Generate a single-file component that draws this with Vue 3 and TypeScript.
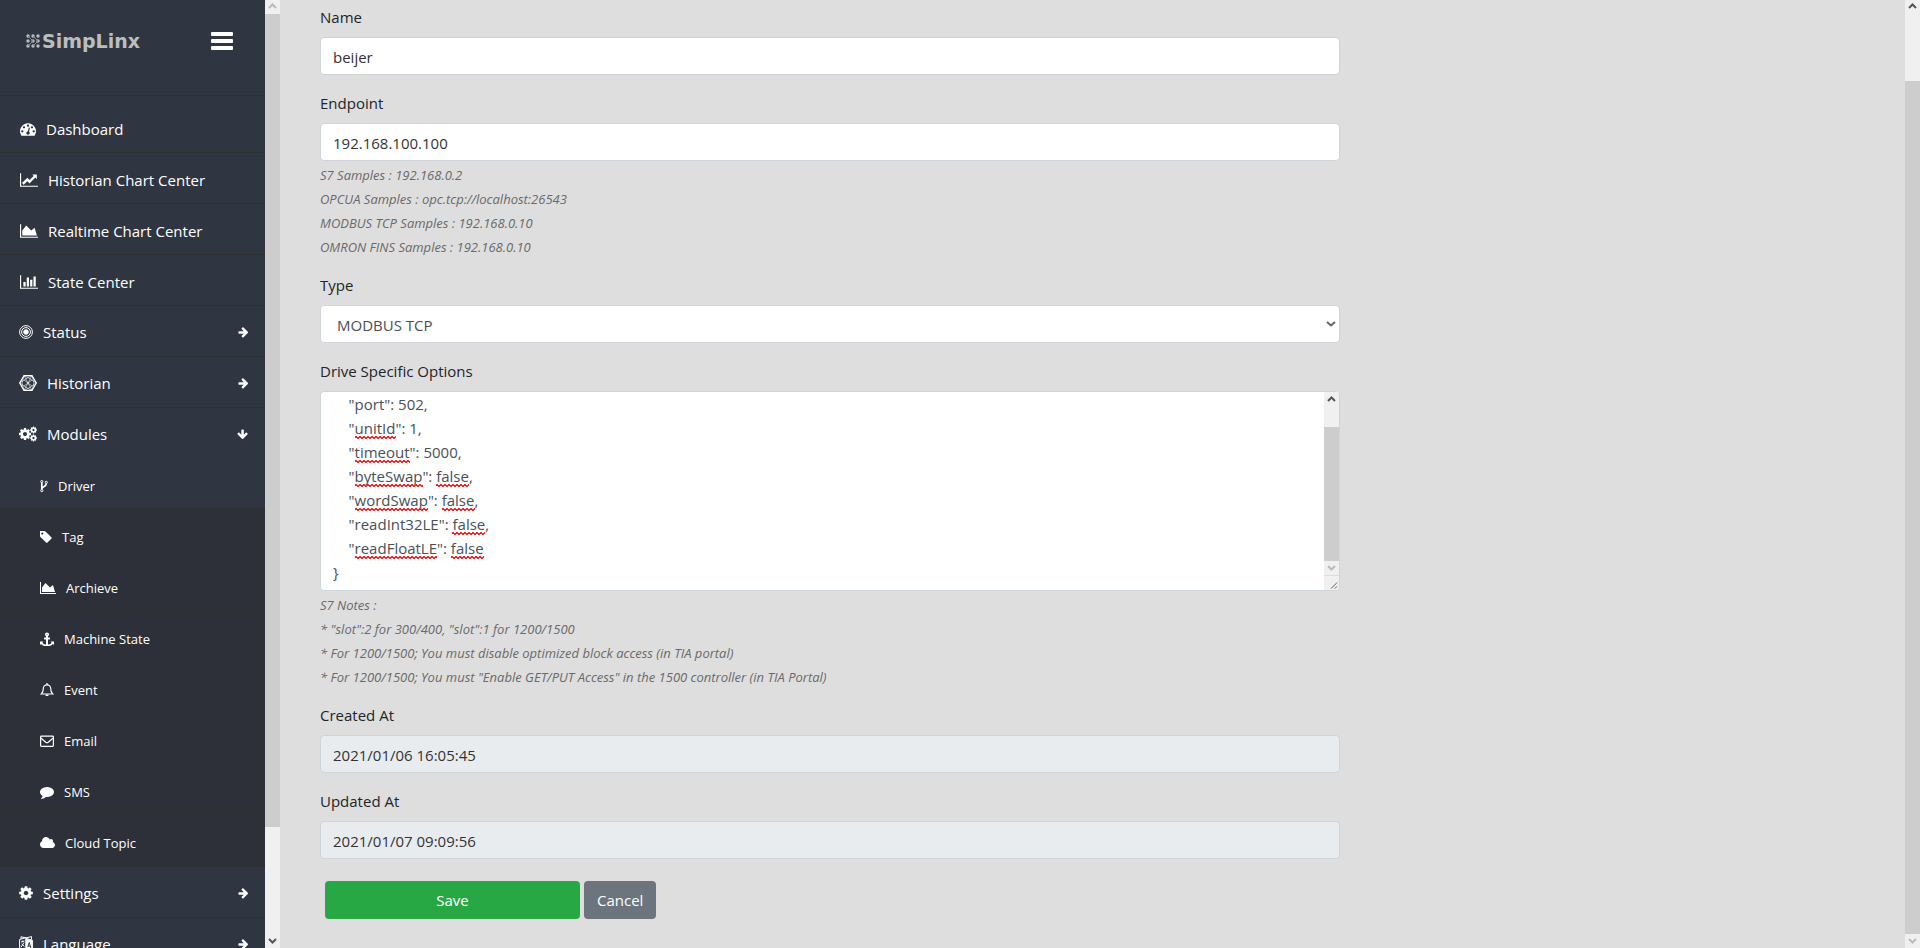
<script setup lang="ts">
import { computed, nextTick, onMounted, ref } from 'vue'

interface NavItem {
  label: string
  icon: string
  w: number
  kind?: 'closed' | 'open'
}

const icons: Record<string, { box: string; d: string }> = {
  dashboard: { box: '0 0 1792 1792', d: 'M384 1152q0-53-37.5-90.5t-90.5-37.5-90.5 37.5-37.5 90.5 37.5 90.5 90.5 37.5 90.5-37.5 37.5-90.5zm192-448q0-53-37.5-90.5t-90.5-37.5-90.5 37.5-37.5 90.5 37.5 90.5 90.5 37.5 90.5-37.5 37.5-90.5zm428 481l101-382q6-26-7.5-48.5t-38.5-29.5-48 6.5-30 39.5l-101 382q-60 5-107 43.5t-63 98.5q-20 77 20 146t117 89 146-20 89-117q16-60-6-117t-72-91zm660-33q0-53-37.5-90.5t-90.5-37.5-90.5 37.5-37.5 90.5 37.5 90.5 90.5 37.5 90.5-37.5 37.5-90.5zm-640-640q0-53-37.5-90.5t-90.5-37.5-90.5 37.5-37.5 90.5 37.5 90.5 90.5 37.5 90.5-37.5 37.5-90.5zm448 192q0-53-37.5-90.5t-90.5-37.5-90.5 37.5-37.5 90.5 37.5 90.5 90.5 37.5 90.5-37.5 37.5-90.5zm320 448q0 261-141 483-19 29-54 29h-1402q-35 0-54-29-141-221-141-483 0-182 71-348t191-286 286-191 348-71 348 71 286 191 191 286 71 348z' },
  line: { box: '0 0 2048 1792', d: 'M2048 1536v128h-2048v-1536h128v1408h1920zm-128-1248v435q0 21-19.5 29.5t-35.5-7.5l-121-121-633 633q-10 10-23 10t-23-10l-233-233-416 416-192-192 585-585q10-10 23-10t23 10l233 233 464-464-121-121q-16-16-7.5-35.5t29.5-19.5h435q14 0 23 9t9 23z' },
  area: { box: '0 0 2048 1792', d: 'M2048 1536v128h-2048v-1536h128v1408h1920zm-384-1024l256 896h-1664v-576l448-576 576 576z' },
  bar: { box: '0 0 2048 1792', d: 'M640 896v512h-256v-512h256zm384-512v1024h-256v-1024h256zm1024 1152v128h-2048v-1536h128v1408h1920zm-640-896v768h-256v-768h256zm384-384v1152h-256v-1152h256z' },
  cog: { box: '128 0 1536 1792', d: 'M1152 896q0-106-75-181t-181-75-181 75-75 181 75 181 181 75 181-75 75-181zm512-109v222q0 12-8 23t-20 13l-185 28q-19 54-39 91 35 50 107 138 10 12 10 25t-9 23q-27 37-99 108t-94 71q-12 0-26-9l-138-108q-44 23-91 38-16 136-29 186-7 28-36 28h-222q-14 0-24.5-8.5t-11.5-21.5l-28-184q-49-16-90-37l-141 107q-10 9-25 9-14 0-25-11-126-114-165-168-7-10-7-23 0-12 8-23 15-21 51-66.5t54-70.5q-27-50-41-99l-183-27q-13-2-21-12.5t-8-23.5v-222q0-12 8-23t19-13l186-28q14-46 39-92-40-57-107-138-10-12-10-24 0-10 9-23 26-36 98.5-107.5t94.5-71.5q13 0 26 10l138 107q44-23 91-38 16-136 29-186 7-28 36-28h222q14 0 24.5 8.5t11.5 21.5l28 184q49 16 90 37l142-107q9-9 24-9 13 0 25 10 129 119 165 170 7 8 7 22 0 12-8 23-15 21-51 66.5t-54 70.5q26 50 41 98l183 28q13 2 21 12.5t8 23.5z' },
  tag: { box: '192 0 1472 1792', d: 'M576 448q0-53-37.5-90.5t-90.5-37.5-90.5 37.5-37.5 90.5 37.5 90.5 90.5 37.5 90.5-37.5 37.5-90.5zm1067 576q0 53-37 90l-491 492q-39 37-91 37-53 0-90-37l-715-716q-38-37-64.5-101t-26.5-117v-416q0-52 38-90t90-38h416q53 0 117 26.5t102 64.5l715 714q37 39 37 91z' },
  anchor: { box: '0 0 1792 1792', d: 'M960 320q0-26-19-45t-45-19-45 19-19 45 19 45 45 19 45-19 19-45zm832 928v352q0 22-20 30-8 2-12 2-12 0-23-9l-93-93q-119 143-318.5 226.5t-429.5 83.5-429.5-83.5-318.5-226.5l-93 93q-9 9-23 9-4 0-12-2-20-8-20-30v-352q0-14 9-23t23-9h352q22 0 30 20 8 19-7 35l-100 100q67 91 189.5 153.5t271.5 82.5v-647h-192q-26 0-45-19t-19-45v-128q0-26 19-45t45-19h192v-163q-58-34-93-92.5t-35-128.5q0-106 75-181t181-75 181 75 75 181q0 70-35 128.5t-93 92.5v163h192q26 0 45 19t19 45v128q0 26-19 45t-45 19h-192v647q149-20 271.5-82.5t189.5-153.5l-100-100q-15-16-7-35 8-20 30-20h352q14 0 23 9t9 23z' },
  comment: { box: '0 0 1792 1792', d: 'M1792 896q0 174-120 321.5t-326 233-450 85.5q-70 0-145-8-198 175-460 242-49 14-114 22-17 2-30.5-9t-17.5-29v-1q-3-4-.5-12t2-10 4.5-9.5l6-9 7-8.5 8-9q7-8 31-34.5t34.5-38 31-39.5 32.5-51 27-59 26-76q-157-89-247.5-220t-90.5-281q0-130 71-248.5t191-204.5 286-136.5 348-50.5q244 0 450 85.5t326 233 120 321.5z' },
  cloud: { box: '64 0 1920 1792', d: 'M1984 1152q0 159-112.5 271.5t-271.5 112.5h-1088q-185 0-316.5-131.5t-131.5-316.5q0-132 71-241.5t187-163.5q-2-28-2-43 0-212 150-362t362-150q158 0 286.5 88t187.5 230q70-62 166-62 106 0 181 75t75 181q0 75-41 138 129 30 213 134.5t84 239.5z' },
  arrow: { box: '64 0 1536 1792', d: 'M1600 960q0 54-37 91l-651 651q-39 37-91 37-51 0-90-37l-75-75q-38-38-38-91t38-91l293-293h-704q-52 0-84.5-37.5t-32.5-90.5v-128q0-53 32.5-90.5t84.5-37.5h704l-293-294q-38-36-38-90t38-90l75-75q38-38 90-38 53 0 91 38l651 651q37 35 37 90z' },
}

const top: NavItem[] = [
  { label: 'Dashboard', icon: 'dashboard', w: 16 },
  { label: 'Historian Chart Center', icon: 'line', w: 18 },
  { label: 'Realtime Chart Center', icon: 'area', w: 18 },
  { label: 'State Center', icon: 'bar', w: 18 },
  { label: 'Status', icon: 'rings', w: 14, kind: 'closed' },
  { label: 'Historian', icon: 'hex', w: 18, kind: 'closed' },
  { label: 'Modules', icon: 'cogs', w: 18, kind: 'open' },
]
const sub: NavItem[] = [
  { label: 'Driver', icon: 'fork', w: 8 },
  { label: 'Tag', icon: 'tag', w: 12 },
  { label: 'Archieve', icon: 'area', w: 16 },
  { label: 'Machine State', icon: 'anchor', w: 14 },
  { label: 'Event', icon: 'bell', w: 14 },
  { label: 'Email', icon: 'mail', w: 14 },
  { label: 'SMS', icon: 'comment', w: 14 },
  { label: 'Cloud Topic', icon: 'cloud', w: 15 },
]
const bottom: NavItem[] = [
  { label: 'Settings', icon: 'cog', w: 14, kind: 'closed' },
  { label: 'Language', icon: 'lang', w: 14, kind: 'closed' },
]
const sections = [
  { name: 'top', items: top },
  { name: 'sub', items: sub },
  { name: 'bottom', items: bottom },
]

const name = ref('beijer')
const endpoint = ref('192.168.100.100')
const type = ref('MODBUS TCP')
const types = ['S7', 'OPCUA', 'MODBUS TCP', 'OMRON FINS']
const options = ref(`{
    "port": 502,
    "unitId": 1,
    "timeout": 5000,
    "byteSwap": false,
    "wordSwap": false,
    "readInt32LE": false,
    "readFloatLE": false
}`)
const createdAt = '2021/01/06 16:05:45'
const updatedAt = '2021/01/07 09:09:56'
const endpointNotes = [
  'S7 Samples : 192.168.0.2',
  'OPCUA Samples : opc.tcp://localhost:26543',
  'MODBUS TCP Samples : 192.168.0.10',
  'OMRON FINS Samples : 192.168.0.10',
]
const optionNotes = [
  'S7 Notes :',
  '* "slot":2 for 300/400, "slot":1 for 1200/1500',
  '* For 1200/1500; You must disable optimized block access (in TIA portal)',
  '* For 1200/1500; You must "Enable GET/PUT Access" in the 1500 controller (in TIA Portal)',
]

// Spelling marks: each flagged word is measured in the editor's own font.
const flagged = /unitId|timeout|byteSwap|wordSwap|readFloatLE|false/g
const editor = ref<HTMLTextAreaElement | null>(null)
const scroll = ref(0)
const font = ref('')
const marks = computed(() => {
  if (!font.value) return []
  const ctx = document.createElement('canvas').getContext('2d')!
  ctx.font = font.value
  return options.value.split('\n').flatMap((line, row) =>
    [...line.matchAll(flagged)].map((m) => ({
      left: Math.round(12 + ctx.measureText(line.slice(0, m.index)).width),
      width: Math.round(ctx.measureText(m[0]).width),
      top: 6 + row * 24 + 20 - scroll.value,
    })),
  ).filter((m) => m.top > 0 && m.top < 196)
})
onMounted(async () => {
  await nextTick()
  const el = editor.value
  if (!el) return
  el.scrollTop = el.scrollHeight
  scroll.value = el.scrollTop
  const cs = getComputedStyle(el)
  font.value = `${cs.fontSize} ${cs.fontFamily}`
})
function onScroll() {
  scroll.value = editor.value?.scrollTop ?? 0
}
</script>

<template>
  <div class="page">
    <nav class="sidebar">
      <div class="menu">
        <header class="brand">
          <a href="#" class="logo">
            <svg width="14" height="14" viewBox="0 0 14 14" aria-hidden="true">
              <g v-for="y in [2, 7, 12]" :key="y">
                <circle v-for="x in [2, 7, 12]" :key="x" :cx="x" :cy="y" r="1.7" />
              </g>
              <path d="M2 2l5 5-5 5M7 2l5 5-5 5" />
            </svg>
            <span>SimpLinx</span>
          </a>
          <button type="button" class="burger" aria-label="Toggle menu">
            <svg width="22" height="18" viewBox="0 0 22 18">
              <rect width="22" height="4" rx="1" />
              <rect y="7" width="22" height="4" rx="1" />
              <rect y="14" width="22" height="4" rx="1" />
            </svg>
          </button>
        </header>
        <ul v-for="s in sections" :key="s.name" :class="['list', s.name]">
          <li v-for="it in s.items" :key="it.label" :class="{ opened: it.kind === 'open' }">
            <a href="#" :class="['item', { group: it.kind }]">
              <svg v-if="icons[it.icon]" class="icon" :width="it.w" :viewBox="icons[it.icon].box"><path :d="icons[it.icon].d" /></svg>
              <svg v-else-if="it.icon === 'rings'" class="icon line" :width="it.w" viewBox="0 0 14 14">
                <circle cx="7" cy="7" r="6.4" /><circle cx="7" cy="7" r="4.4" /><circle cx="7" cy="7" r="2.3" class="solid" />
              </svg>
              <svg v-else-if="it.icon === 'hex'" class="icon line thin" :width="it.w" viewBox="0 0 18 16">
                <path d="M5 .7h8l4.3 7.3L13 15.3H5L.7 8z" stroke-width="1.2" />
                <path d="M5 .7L13 15.3M13 .7L5 15.3M5 .7L3 8l2 7.3M13 .7L15 8l-2 7.3M.7 8L9 2.5 17.3 8 9 13.5zM5 5l8 6M13 5l-8 6M5 .7l4 1.8 4-1.8M5 15.3l4-1.8 4 1.8" />
              </svg>
              <svg v-else-if="it.icon === 'cogs'" class="icon" :width="it.w" viewBox="0 0 18 16">
                <svg x="0" y="1" width="12" height="14" :viewBox="icons.cog.box"><path :d="icons.cog.d" /></svg>
                <svg x="11" y="0" width="7" height="8" :viewBox="icons.cog.box"><path :d="icons.cog.d" /></svg>
                <svg x="11" y="8" width="7" height="8" :viewBox="icons.cog.box"><path :d="icons.cog.d" /></svg>
              </svg>
              <svg v-else-if="it.icon === 'fork'" class="icon line" :width="it.w" viewBox="0 0 8 14">
                <circle cx="1.8" cy="2.6" r="1.1" /><circle cx="6.3" cy="3.4" r="1.1" /><circle cx="1.8" cy="11.6" r="1.1" />
                <path d="M1.8 3.8v6.6M6.3 4.6c0 3.6-4.3 2.6-4.4 5" stroke-width="1.7" />
              </svg>
              <svg v-else-if="it.icon === 'bell'" class="icon line" :width="it.w" viewBox="0 0 14 14">
                <path d="M1.3 11C3 9.5 3.3 7.5 3.3 5.5a3.7 3.7 0 0 1 7.4 0c0 2 .3 4 2 5.5z" stroke-width="1.2" />
                <path d="M7 .3v1.5M5.600 12.300h2.800" stroke-width="1.6" />
              </svg>
              <svg v-else-if="it.icon === 'mail'" class="icon line" :width="it.w" viewBox="0 0 14 14">
                <rect x=".6" y="2.1" width="12.8" height="10.2" rx=".8" stroke-width="1.2" />
                <path d="M.8 4l5 4.200q1.200.8 2.400 0L13.200 4" stroke-width="1.2" />
              </svg>
              <svg v-else class="icon line" :width="it.w" viewBox="0 0 14 16">
                <path d="M.6 3.500L7 1.600v11.500L.6 15zM2 2.900V.8l5 1.100L12.500.6v2.800" />
                <path d="M7 2.500l6.400 1.700V15.500L7 13.500z" class="solid" />
                <path d="M2 6l3.500-1M3.700 4.500v1.300M5 6.500L2 11.200M2.800 8l2.600 2.500" />
                <path d="M8.800 11l1.500-4.500L11.900 12M9.300 9.800l2 .5" class="cut" />
              </svg>
              <span>{{ it.label }}</span>
              <svg v-if="it.kind" :class="['arrow', it.kind]" width="10" height="12" :viewBox="icons.arrow.box"><path :d="icons.arrow.d" /></svg>
            </a>
          </li>
        </ul>
      </div>
      <div class="bar side-bar" aria-hidden="true">
        <svg class="off" viewBox="0 0 15 14"><path d="M4 8l3.500-3.500L11 8" /></svg>
        <div class="track"><i class="thumb"></i><i class="rest"></i></div>
        <svg viewBox="0 0 15 14"><path d="M4 5l3.500 3.500L11 5" /></svg>
      </div>
    </nav>

    <main class="content">
      <form class="form" @submit.prevent>
        <div class="field">
          <label for="name">Name</label>
          <input id="name" v-model="name" class="control" type="text" />
        </div>
        <div class="field noted">
          <label for="endpoint">Endpoint</label>
          <input id="endpoint" v-model="endpoint" class="control" type="text" />
          <div class="notes">
            <p v-for="n in endpointNotes" :key="n">{{ n }}</p>
          </div>
        </div>
        <div class="field">
          <label for="type">Type</label>
          <div class="select">
            <select id="type" v-model="type" class="control">
              <option v-for="t in types" :key="t">{{ t }}</option>
            </select>
            <svg class="chevron" width="10" height="6" viewBox="0 0 10 6"><path d="M1 1l4 3.500L9 1" /></svg>
          </div>
        </div>
        <div class="field noted">
          <label for="options">Drive Specific Options</label>
          <div class="editor">
            <textarea id="options" ref="editor" v-model="options" spellcheck="false" @scroll="onScroll"></textarea>
            <i v-for="(m, i) in marks" :key="i" class="mark" :style="{ left: m.left + 'px', top: m.top + 'px', width: m.width + 'px' }"></i>
            <div class="bar editor-bar" aria-hidden="true">
              <svg viewBox="0 0 15 14"><path d="M4 9l3.500-3.500L11 9" /></svg>
              <div class="track"><i class="rest"></i><i class="thumb"></i></div>
              <svg class="off" viewBox="0 0 15 14"><path d="M4 5l3.500 3.500L11 5" /></svg>
              <svg class="grip" viewBox="0 0 15 15"><path d="M7 13.500l6.500-6.500M11 13.500l2.500-2.500" /></svg>
            </div>
          </div>
          <div class="notes">
            <p v-for="n in optionNotes" :key="n">{{ n }}</p>
          </div>
        </div>
        <div class="field">
          <label for="created">Created At</label>
          <input id="created" :value="createdAt" class="control" type="text" readonly />
        </div>
        <div class="field">
          <label for="updated">Updated At</label>
          <input id="updated" :value="updatedAt" class="control" type="text" readonly />
        </div>
        <div class="actions">
          <button type="submit" class="btn save">Save</button>
          <button type="button" class="btn cancel">Cancel</button>
        </div>
      </form>
    </main>

    <div class="bar page-bar" aria-hidden="true">
      <svg viewBox="0 0 15 14"><path d="M4 8l3.500-3.500L11 8" /></svg>
      <div class="track"><i class="rest"></i><i class="thumb"></i></div>
      <svg class="off" viewBox="0 0 15 14"><path d="M4 5l3.500 3.500L11 5" /></svg>
    </div>
  </div>
</template>

<style>
body {
  margin: 0;
  background: #dedede;
}
</style>

<style scoped>
* {
  box-sizing: border-box;
}
.page {
  display: flex;
  height: 100vh;
  overflow: hidden;
  background: #dedede;
  color: #212529;
  font: 15px/24px "Open Sans", "Noto Sans", sans-serif;
}
.sidebar {
  display: flex;
  flex: 0 0 280px;
  height: 100%;
}
.menu {
  flex: 1;
  overflow: hidden;
  background: #303641;
}
.brand {
  display: flex;
  align-items: center;
  justify-content: space-between;
  height: 96px;
  padding: 0 32px 14px 26px;
  border-bottom: 1px solid #2e2f31;
}
.logo {
  display: flex;
  align-items: center;
  gap: 2px;
  color: #bcbdbf;
  fill: #bcbdbf;
  font: bold 19px/24px "DejaVu Sans", sans-serif;
  text-decoration: none;
}
.logo path {
  fill: none;
  stroke: #8d9196;
}
.burger {
  padding: 0;
  border: 0;
  background: none;
  fill: #fff;
}
.burger svg {
  display: block;
}
.list {
  margin: 0;
  padding: 0;
  list-style: none;
}
.top {
  padding-top: 6px;
}
.item {
  display: flex;
  align-items: center;
  gap: 10px;
  height: 51px;
  padding: 4px 17px 0 20px;
  border-bottom: 1px solid #2e2f31;
  color: #fff;
  fill: #fff;
  text-decoration: none;
}
.group {
  padding: 2px 17px 0 19px;
}
.opened .item {
  height: 50px;
  border: 0;
}
.icon {
  flex: none;
  height: 16px;
}
.sub {
  background: #2d3038;
  border-bottom: 1px solid #2e2f31;
}
.sub li:first-child {
  background: #303641;
}
.sub .item {
  padding: 5px 17px 0 40px;
  font-size: 13px;
}
.sub .icon {
  height: 14px;
}
.line {
  fill: none;
  stroke: #fff;
}
.thin {
  stroke-width: 0.6;
}
.solid {
  fill: #fff;
}
.cut {
  stroke: #303641;
}
.arrow {
  flex: none;
  margin-left: auto;
}
.arrow.open {
  transform: rotate(90deg);
}
.bar {
  display: flex;
  flex-direction: column;
  flex: 0 0 15px;
  background: #f0f0f0;
}
.bar svg {
  flex: none;
  width: 15px;
  height: 14px;
  fill: none;
  stroke: #555;
  stroke-width: 2;
}
.bar svg.off {
  stroke: #bbb;
}
.track {
  display: flex;
  flex-direction: column;
  flex: 1;
}
.thumb {
  background: #cdcdcd;
}
.side-bar .thumb {
  flex: 813;
}
.side-bar .rest {
  flex: 107;
}
.page-bar .rest {
  flex: 67;
}
.page-bar .thumb {
  flex: 853;
}
.editor-bar .rest {
  flex: 21;
}
.editor-bar .thumb {
  flex: 133;
}
.bar svg.grip {
  height: 15px;
  border-top: 1px solid #dcdcdc;
  stroke-width: 1;
}
.content {
  flex: 1;
  min-width: 0;
  padding: 5px 25px 0;
}
.form {
  width: 66.6667%;
  padding: 0 15px;
}
.field {
  margin-bottom: 16px;
}
.noted {
  margin-bottom: 14px;
}
label {
  display: block;
  margin-bottom: 8px;
}
.control {
  display: block;
  width: 100%;
  height: 38px;
  padding: 7px 12px 5px;
  border: 1px solid #ced4da;
  border-radius: 4px;
  background: #fff;
  color: #333;
  font: inherit;
  outline: 0;
}
.control:read-only:not(select) {
  background: #e9ecef;
}
.select {
  position: relative;
}
select.control {
  padding-left: 16px;
  appearance: none;
  color: #495057;
}
.chevron {
  position: absolute;
  top: 16px;
  right: 4px;
  fill: none;
  stroke: #666;
  stroke-width: 2;
  pointer-events: none;
}
.editor {
  position: relative;
  display: flex;
  height: 200px;
  overflow: hidden;
  border: 1px solid #ced4da;
  border-radius: 4px;
  background: #fff;
}
textarea {
  flex: 1;
  min-width: 0;
  padding: 6px 12px;
  border: 0;
  background: none;
  color: #495057;
  font: inherit;
  outline: 0;
  overflow: hidden;
  resize: none;
}
.mark {
  position: absolute;
  height: 3px;
  pointer-events: none;
  background:
    linear-gradient(90deg, #f22 50%, transparent 50%) 0 0 / 4px 2px repeat-x,
    linear-gradient(90deg, transparent 50%, #f22 50%) 0 1px / 4px 2px repeat-x;
}
.notes {
  padding-top: 2px;
  color: #6a6a6a;
  font-size: 13px;
  font-style: italic;
}
.notes p {
  margin: 0;
}
.actions {
  display: flex;
  gap: 4px;
  padding-top: 6px;
}
.btn {
  height: 38px;
  padding: 0 13px;
  border: 0;
  border-radius: 4px;
  color: #fff;
  font: inherit;
}
.save {
  width: 25%;
  margin-left: 5px;
  background: #28a745;
}
.cancel {
  background: #6c757d;
}
</style>
